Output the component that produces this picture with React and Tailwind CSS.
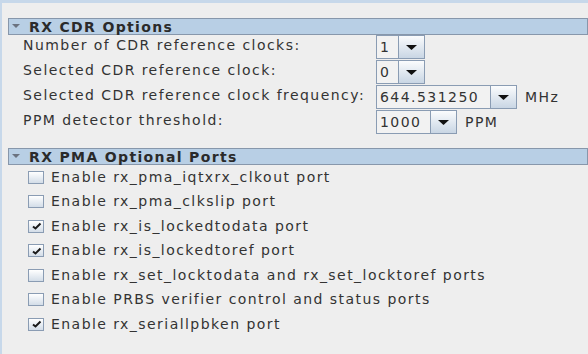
import React from 'react';

const font = { fontFamily: '"DejaVu Sans", Verdana, sans-serif' };

function SectionHeader({ title }) {
  return (
    <div className="flex items-center h-[17px] ml-[6px] border border-[#8797ab] bg-[#b8cfe5]">
      <svg width="8" height="5" viewBox="0 0 8 5" className="ml-[3px] mr-[9px]">
        <path d="M0 0 L8 0 L4 4 Z" fill="#6b7380" />
      </svg>
      <span className="text-[14px] font-bold text-[#2a2a2a] leading-none tracking-[1.35px]">{title}</span>
    </div>
  );
}

function Combo({ value, fieldWidth, unit }) {
  return (
    <div className="flex items-center">
      <div className="flex h-[24px] border border-[#8a9cb3] bg-[#eeeeee]">
        <div
          className="flex items-center pl-[3px] text-[14px] text-[#333] bg-[#f2f2f2] border-r border-[#8a9cb3]"
          style={{ width: fieldWidth }}
        >
          {value}
        </div>
        <div className="flex items-center justify-center w-[25px] bg-gradient-to-b from-[#fbfcfd] to-[#c9d6e4]">
          <svg width="11" height="5" viewBox="0 0 11 5">
            <path d="M0 0 L11 0 L5.5 5 Z" fill="#111" />
          </svg>
        </div>
      </div>
      {unit && <span className="ml-[8px] text-[14px] text-[#333]">{unit}</span>}
    </div>
  );
}

function ComboRow({ label, value, fieldWidth, unit }) {
  return (
    <div className="flex h-[25px] items-start">
      <div className="w-[374px] pl-[21px] text-[14px] text-[#333] whitespace-nowrap">{label}</div>
      <Combo value={value} fieldWidth={fieldWidth} unit={unit} />
    </div>
  );
}

function CheckRow({ label, checked }) {
  return (
    <div className="flex items-center h-[24.5px] pl-[26px]">
      <div className="flex items-center justify-center w-[16px] h-[13px] border border-[#8a9cb3] bg-gradient-to-b from-[#ffffff] to-[#d3dde8]">
        {checked && (
          <svg width="11" height="8" viewBox="0 0 11 8">
            <path d="M2 4.5 L4.5 6.5 L9.5 1.5" stroke="#1a1a1a" strokeWidth="2" fill="none" />
          </svg>
        )}
      </div>
      <span className="ml-[7px] text-[14px] text-[#333] whitespace-nowrap">{label}</span>
    </div>
  );
}

const ports = [
  { label: 'Enable rx_pma_iqtxrx_clkout port', checked: false },
  { label: 'Enable rx_pma_clkslip port', checked: false },
  { label: 'Enable rx_is_lockedtodata port', checked: true },
  { label: 'Enable rx_is_lockedtoref port', checked: true },
  { label: 'Enable rx_set_locktodata and rx_set_locktoref ports', checked: false },
  { label: 'Enable PRBS verifier control and status ports', checked: false },
  { label: 'Enable rx_seriallpbken port', checked: true },
];

export default function App() {
  return (
    <div className="w-[588px] h-[354px] overflow-hidden bg-[#eeeeee] tracking-[1.45px]" style={font}>
      <div className="h-[3px] bg-[#c7d8ea]" />
      <div className="h-[351px] border-l-2 border-[#c7d8ea] pt-[15px]">
        <SectionHeader title="RX CDR Options" />
        <div>
          <ComboRow label="Number of CDR reference clocks:" value="1" fieldWidth="22px" />
          <ComboRow label="Selected CDR reference clock:" value="0" fieldWidth="22px" />
          <ComboRow label="Selected CDR reference clock frequency:" value="644.531250" fieldWidth="114px" unit="MHz" />
          <ComboRow label="PPM detector threshold:" value="1000" fieldWidth="54px" unit="PPM" />
        </div>
        <div className="h-[13px]" />
        <SectionHeader title="RX PMA Optional Ports" />
        <div>
          {ports.map((p) => (
            <CheckRow key={p.label} label={p.label} checked={p.checked} />
          ))}
        </div>
      </div>
    </div>
  );
}
